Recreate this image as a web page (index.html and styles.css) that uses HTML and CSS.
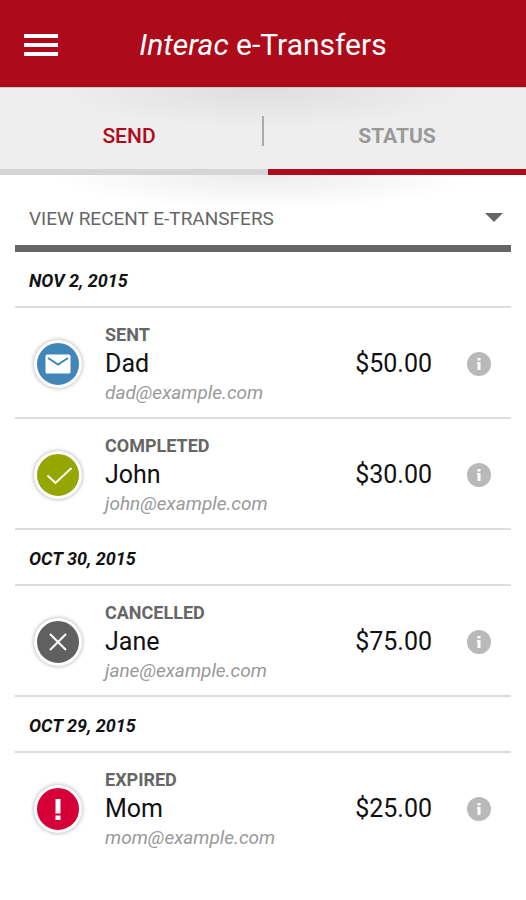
FILE: index.html
```html
<!DOCTYPE html>
<html lang="en">
<head>
<meta charset="utf-8">
<meta name="viewport" content="width=device-width, initial-scale=1">
<title>Interac e-Transfers</title>
<link rel="stylesheet" href="styles.css">
</head>
<body>
<header class="app-bar">
  <button class="menu-button" type="button" aria-label="Menu">
    <svg width="34" height="22" viewBox="0 0 34 22" fill="#fff"><path d="M0 0h34v4H0zM0 9h34v4H0zM0 18h34v4H0z"/></svg>
  </button>
  <h1 class="title"><em>Interac</em> e-Transfers</h1>
</header>
<nav class="tabs">
  <a class="tab tab-send" href="#send">SEND</a>
  <span class="divider"></span>
  <a class="tab tab-status" href="#status" aria-current="page">STATUS</a>
</nav>
<main class="content">
  <div class="filter">
    <select class="filter-select" aria-label="View e-Transfers">
      <option>VIEW RECENT E-TRANSFERS</option>
    </select>
    <svg class="filter-arrow" width="18" height="9" viewBox="0 0 18 9"><path d="M0 0h18L9 9z" fill="#666"/></svg>
  </div>
  <div class="panel">
    <h2 class="date">NOV 2, 2015</h2>
    <article class="transfer">
      <span class="badge sent"><svg width="42" height="42" viewBox="0 0 42 42"><rect x="8.500" y="11.500" width="25" height="19" rx="1.500" fill="#fff"/><path d="M11 15 21 21.500 31 15" fill="none" stroke="#4186b9" stroke-width="2"/></svg></span>
      <div class="details"><span class="state">SENT</span><span class="name">Dad</span><span class="email">dad@example.com</span></div>
      <span class="amount">$50.00</span>
      <button class="info" type="button" aria-label="Details for Dad"><svg width="24" height="24" viewBox="0 0 24 24"><circle cx="12" cy="12" r="12" fill="#b9b9b9"/><path d="M10.500 6h3v2.500h-3zM10 10h3.500v8h-3v-6H10z" fill="#fff"/></svg></button>
    </article>
    <article class="transfer">
      <span class="badge completed"><svg width="42" height="42" viewBox="0 0 42 42"><path d="M10.500 21.500 18.500 29 34.500 14" fill="none" stroke="#fff" stroke-width="2"/></svg></span>
      <div class="details"><span class="state">COMPLETED</span><span class="name">John</span><span class="email">john@example.com</span></div>
      <span class="amount">$30.00</span>
      <button class="info" type="button" aria-label="Details for John"><svg width="24" height="24" viewBox="0 0 24 24"><circle cx="12" cy="12" r="12" fill="#b9b9b9"/><path d="M10.500 6h3v2.500h-3zM10 10h3.500v8h-3v-6H10z" fill="#fff"/></svg></button>
    </article>
    <h2 class="date">OCT 30, 2015</h2>
    <article class="transfer">
      <span class="badge cancelled"><svg width="42" height="42" viewBox="0 0 42 42"><path d="M13 13 29 29M29 13 13 29" fill="none" stroke="#fff" stroke-width="2"/></svg></span>
      <div class="details"><span class="state">CANCELLED</span><span class="name">Jane</span><span class="email">jane@example.com</span></div>
      <span class="amount">$75.00</span>
      <button class="info" type="button" aria-label="Details for Jane"><svg width="24" height="24" viewBox="0 0 24 24"><circle cx="12" cy="12" r="12" fill="#b9b9b9"/><path d="M10.500 6h3v2.500h-3zM10 10h3.500v8h-3v-6H10z" fill="#fff"/></svg></button>
    </article>
    <h2 class="date">OCT 29, 2015</h2>
    <article class="transfer">
      <span class="badge expired"><svg width="42" height="42" viewBox="0 0 42 42"><path d="M18.500 11h5v14.500h-5zM18.500 27.500h5V32h-5z" fill="#fff"/></svg></span>
      <div class="details"><span class="state">EXPIRED</span><span class="name">Mom</span><span class="email">mom@example.com</span></div>
      <span class="amount">$25.00</span>
      <button class="info" type="button" aria-label="Details for Mom"><svg width="24" height="24" viewBox="0 0 24 24"><circle cx="12" cy="12" r="12" fill="#b9b9b9"/><path d="M10.500 6h3v2.500h-3zM10 10h3.500v8h-3v-6H10z" fill="#fff"/></svg></button>
    </article>
  </div>
</main>
</body>
</html>
```
FILE: styles.css
```css
* {
  box-sizing: border-box;
}

body {
  margin: 0;
  background: #fff;
  color: #111;
  font-family: Roboto, "Liberation Sans", sans-serif;
}

button {
  padding: 0;
  border: 0;
  background: none;
  cursor: pointer;
}

svg {
  display: block;
}

.app-bar {
  display: grid;
  grid-template-columns: 34px 1fr 34px;
  align-items: center;
  padding: 25px 24px 22px;
  background: #ae0b1a;
}

.title {
  margin: 0;
  color: #fff;
  font-size: 30px;
  font-weight: 400;
  line-height: 40px;
  text-align: center;
}

.tabs {
  display: flex;
  align-items: stretch;
  border-top: 1px solid #c8c8c8;
  background: radial-gradient(ellipse 40% 40px at 50% 0, #dedede, #eeeeee) #eee;
}

.tab {
  flex: 1;
  padding: 36px 0 21px;
  border-bottom: 6px solid #d5d5d5;
  font-size: 21px;
  line-height: 24px;
  text-align: center;
  text-decoration: none;
}

.tab-send {
  color: #ae0b1a;
  font-weight: 500;
}

.tab-status {
  border-bottom-color: #ae0b1a;
  color: #999;
  font-weight: 700;
}

.divider {
  width: 10px;
  border-bottom: 6px solid #d5d5d5;
  background: linear-gradient(#aaa, #aaa) 4px 28px / 2px 30px no-repeat;
}

.content {
  padding: 0 15px;
  background: radial-gradient(ellipse 40% 34px at 50% 0, #ececec, #fff) #fff;
}

.filter {
  display: grid;
  align-items: center;
  border-bottom: 7px solid #666;
}

.filter-select {
  grid-area: 1 / 1;
  width: 100%;
  padding: 32px 32px 14px 14px;
  border: 0;
  appearance: none;
  background: none;
  color: #666;
  font-family: inherit;
  font-size: 19px;
  font-weight: 400;
  line-height: 24px;
}

.filter-arrow {
  grid-area: 1 / 1;
  justify-self: end;
  margin: 14px 8px 0 0;
  pointer-events: none;
}

.date {
  margin: 0;
  padding: 18px 14px 14px;
  border-bottom: 2px solid #ddd;
  font-size: 18px;
  font-style: italic;
  font-weight: 700;
  line-height: 22px;
}

.transfer {
  display: grid;
  grid-template-columns: 48px 1fr auto 24px;
  align-items: center;
  padding: 14px 20px 11px 19px;
  border-bottom: 2px solid #ddd;
}

.transfer:last-child {
  border-bottom: 0;
}

.badge {
  width: 48px;
  border: 3px solid #fff;
  border-radius: 50%;
  box-shadow: 0 0 4px rgba(0, 0, 0, 0.35);
}

.sent {
  background: #4186b9;
}

.completed {
  background: #95a600;
}

.cancelled {
  background: #606060;
}

.expired {
  background: #d50037;
}

.details {
  display: grid;
  padding-left: 23px;
}

.state {
  color: #666;
  font-size: 18px;
  font-weight: 700;
  line-height: 26px;
}

.name {
  font-size: 25px;
  line-height: 32px;
}

.email {
  color: #999;
  font-size: 19px;
  font-style: italic;
  font-weight: 400;
  line-height: 26px;
}

.amount {
  margin-right: 35px;
  font-size: 25px;
  line-height: 32px;
}
```
